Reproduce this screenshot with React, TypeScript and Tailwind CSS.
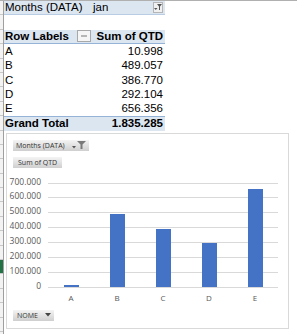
import React from "react";

const ROWS = [
  { label: "A", value: "10.998", n: 10998 },
  { label: "B", value: "489.057", n: 489057 },
  { label: "C", value: "386.770", n: 386770 },
  { label: "D", value: "292.104", n: 292104 },
  { label: "E", value: "656.356", n: 656356 },
];

const TICKS = ["700.000", "600.000", "500.000", "400.000", "300.000", "200.000", "100.000", "0"];

const ROW_H = "h-[14.4px]";

function FieldButton({ children }: { children: React.ReactNode }) {
  return (
    <div className="flex h-[11px] items-center gap-[3px] bg-gradient-to-b from-[#f4f4f4] to-[#cfcfcf] px-[3px] text-[7px] leading-none text-[#333]">
      {children}
    </div>
  );
}

function DropArrow() {
  return (
    <svg width="6" height="4" viewBox="0 0 6 4">
      <path d="M0 0 H6 L3 3.5 Z" fill="#444" />
    </svg>
  );
}

export default function App() {
  return (
    <div className="flex h-[334px] w-[297px] overflow-hidden border-t border-[#b0b0b0] bg-white text-[11.5px] text-black [font-family:'Liberation_Sans',Arial,sans-serif]">
      {/* row header strip */}
      <div className="flex w-[4px] shrink-0 flex-col border-r border-[#9f9f9f] bg-[#f3f3f3]">
        {Array.from({ length: 24 }).map((_, i) => (
          <div
            key={i}
            className={`${ROW_H} shrink-0 border-b border-[#c8c8c8] ${i === 18 ? "bg-[#217346]" : ""}`}
          />
        ))}
      </div>

      <div className="flex min-w-0 flex-1 flex-col">
        {/* pivot table */}
        <div className="w-[161px]">
          <div className={`flex ${ROW_H} items-center border-b border-[#b8cce4] bg-[#dce6f1]`}>
            <div className="w-[88px] pl-[1px]">Months (DATA)</div>
            <div className="flex flex-1 items-center justify-between pl-[1px] pr-[2px]">
              <span>jan</span>
              <div className="flex h-[11px] w-[10px] items-center justify-center border border-[#b5b5b5] bg-[#f0f0f0]">
                <svg width="8" height="7" viewBox="0 0 8 7">
                  <path d="M3 0 H8 L6 2.5 V6 H5 V2.5 Z M0 4 H3.5 L1.75 6 Z" fill="#555" />
                </svg>
              </div>
            </div>
          </div>
          <div className={ROW_H} />
          <div className={`flex ${ROW_H} items-center border-b border-[#95b3d7] bg-[#dce6f1] font-bold`}>
            <div className="flex w-[88px] items-center justify-between pl-[1px] pr-[1px]">
              <span>Row Labels</span>
              <div className="flex h-[12px] w-[14px] items-center justify-center border border-[#a8a8a8] bg-[#f5f5f5]">
                <svg width="6" height="4" viewBox="0 0 6 4">
                  <path d="M0 1.5 H6 V2.5 H0 Z" fill="#777" />
                </svg>
              </div>
            </div>
            <div className="flex-1 pr-[2px] text-right">Sum of QTD</div>
          </div>
          {ROWS.map((r) => (
            <div key={r.label} className={`flex ${ROW_H} items-center`}>
              <div className="w-[88px] pl-[1px]">{r.label}</div>
              <div className="flex-1 pr-[2px] text-right">{r.value}</div>
            </div>
          ))}
          <div className={`flex ${ROW_H} items-center border-t border-[#95b3d7] bg-[#dce6f1] font-bold`}>
            <div className="w-[88px] pl-[1px]">Grand Total</div>
            <div className="flex-1 pr-[2px] text-right">1.835.285</div>
          </div>
        </div>

        {/* pivot chart */}
        <div className="ml-[2px] mt-[2px] h-[196px] w-[283px] border border-[#d9d9d9] bg-white pl-[6px] pt-[6px] [font-family:'Open_Sans',sans-serif]">
          <div className="flex">
            <FieldButton>
              <span>Months (DATA)</span>
              <svg width="14" height="8" viewBox="0 0 14 8" className="ml-[4px]">
                <path d="M0 5 H4 L2 7.5 Z" fill="#555" />
                <path d="M5 0 H14 L10.5 3.5 V8 H8.5 V3.5 Z" fill="#7a7a7a" />
              </svg>
            </FieldButton>
          </div>
          <div className="mt-[6px] flex">
            <FieldButton>
              <span className="px-[2px]">Sum of QTD</span>
            </FieldButton>
          </div>

          <div className="mt-[7px] flex">
            <div className="flex w-[28px] flex-col items-end pt-[8px] text-[8.5px] leading-none text-[#595959]">
              {TICKS.map((t) => (
                <div key={t} className="flex h-[14.86px] items-start">
                  <span className="-mt-[5px]">{t}</span>
                </div>
              ))}
            </div>
            <div className="ml-[7px] flex flex-col">
              <div className="relative h-[113px] w-[230px]">
                {TICKS.map((t, i) => (
                  <div
                    key={t}
                    className="absolute left-0 right-0 h-px bg-[#d9d9d9]"
                    style={{ top: 8 + i * 14.86 }}
                  />
                ))}
                <div className="absolute left-0 right-0 top-[8px] flex h-[104px] items-end">
                  {ROWS.map((r) => (
                    <div key={r.label} className="flex flex-1 justify-center">
                      <div
                        className="w-[15px] bg-[#4472c4]"
                        style={{ height: Math.max(1.5, (r.n / 700000) * 104) }}
                      />
                    </div>
                  ))}
                </div>
              </div>
              <div className="mt-[6px] flex text-[8px] leading-none text-[#595959]">
                {ROWS.map((r) => (
                  <div key={r.label} className="flex-1 text-center">
                    {r.label}
                  </div>
                ))}
              </div>
            </div>
          </div>

          <div className="mt-[8px] flex">
            <FieldButton>
              <span className="pl-[1px]">NOME</span>
              <span className="ml-[4px]">
                <DropArrow />
              </span>
            </FieldButton>
          </div>
        </div>
      </div>
    </div>
  );
}
